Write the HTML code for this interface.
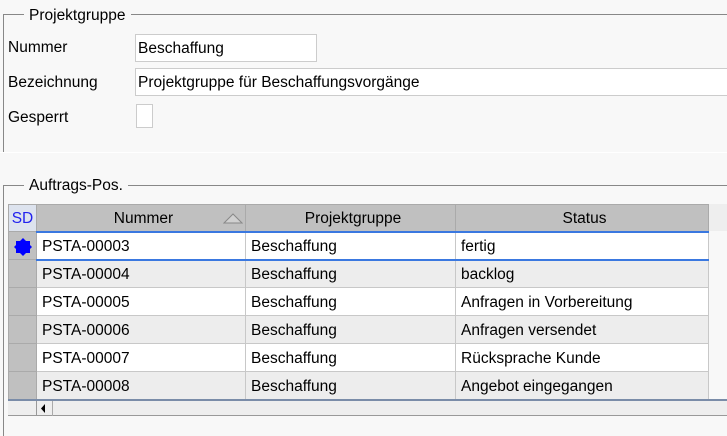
<!DOCTYPE html>
<html><head><meta charset="utf-8"><style>
*{margin:0;padding:0;box-sizing:border-box}
body{width:727px;height:436px;background:#f8f8f8;font-family:"Liberation Sans",sans-serif;font-size:15.5px;color:#000;position:relative;overflow:hidden}
.a{position:absolute}
.lbl{position:absolute;left:8px}
.inp{position:absolute;background:#fff;border:1px solid #ccc;padding-left:2px;line-height:28px}
table{position:absolute;left:8px;top:204px;border-collapse:collapse;table-layout:fixed}
td,th{height:28px;border:1px solid #c8c8c8;padding-left:5px;padding-top:2px;text-align:left;font-weight:normal;white-space:nowrap}
th{background:#c0c0c0;text-align:center;border-color:#aaa;height:27px}
tr.o td{background:#ededed}
tr.e td{background:#fff}
td.sd{background:#c0c0c0!important;border-color:#aaa;padding:0}
</style></head><body>
<div class="a" style="left:0;top:0;width:727px;height:152px;background:#f8f8f8"></div>
<div class="a" style="left:3px;top:14px;width:724px;border-top:1px solid #888"></div>
<div class="a" style="left:3px;top:14px;height:138px;border-left:1px solid #888"></div>
<div class="a" style="left:24px;top:7px;background:#f8f8f8;padding:0 5px">Projektgruppe</div>
<div class="lbl" style="top:39px">Nummer</div>
<div class="inp" style="left:135px;top:34px;width:182px;height:28px">Beschaffung</div>
<div class="lbl" style="top:74px">Bezeichnung</div>
<div class="inp" style="left:135px;top:68px;width:600px;height:28px">Projektgruppe für Beschaffungsvorgänge</div>
<div class="lbl" style="top:109px">Gesperrt</div>
<div class="a" style="left:136px;top:104px;width:17px;height:24px;background:#fff;border:1px solid #ccc"></div>
<div class="a" style="left:0;top:152px;width:727px;border-top:1px solid #fff"></div>
<div class="a" style="left:3px;top:185px;width:724px;border-top:1px solid #888"></div>
<div class="a" style="left:3px;top:185px;height:251px;border-left:1px solid #888"></div>
<div class="a" style="left:24px;top:177px;background:#f8f8f8;padding:0 5px">Auftrags-Pos.</div>
<div class="a" style="left:708px;top:204px;width:19px;height:27px;background:#eee"></div>
<table>
<colgroup><col style="width:28px"><col style="width:209px"><col style="width:210px"><col style="width:253px"></colgroup>
<tr><th style="background:#dde3ee;color:#22e;padding:2px 0 0 0">SD</th><th style="position:relative">Nummer<svg class="a" style="right:2px;top:8px" width="20" height="11"><path d="M1 10L10 1L19 10Z" fill="#d0d0d0" stroke="#888"/></svg></th><th>Projektgruppe</th><th>Status</th></tr>
<tr class="e"><td class="sd" style="background:#c0c0c0"><svg width="26" height="26" style="display:block;margin-left:1px"><path d="M13 5L16 8L20 8L20 12L22 14L20 16L20 20L16 20L13 23L10 20L6 20L6 16L4 14L6 12L6 8L10 8Z" fill="#00f"/></svg></td><td style="border-top:2px solid #3a78e0;border-bottom:2px solid #3a78e0">PSTA-00003</td><td style="border-top:2px solid #3a78e0;border-bottom:2px solid #3a78e0">Beschaffung</td><td style="border-top:2px solid #3a78e0;border-bottom:2px solid #3a78e0">fertig</td></tr>
<tr class="o"><td class="sd"></td><td>PSTA-00004</td><td>Beschaffung</td><td>backlog</td></tr>
<tr class="e"><td class="sd"></td><td>PSTA-00005</td><td>Beschaffung</td><td>Anfragen in Vorbereitung</td></tr>
<tr class="o"><td class="sd"></td><td>PSTA-00006</td><td>Beschaffung</td><td>Anfragen versendet</td></tr>
<tr class="e"><td class="sd"></td><td>PSTA-00007</td><td>Beschaffung</td><td>Rücksprache Kunde</td></tr>
<tr class="o"><td class="sd"></td><td>PSTA-00008</td><td>Beschaffung</td><td>Angebot eingegangen</td></tr>
</table>
<div class="a" style="left:8px;top:399px;width:719px;border-top:2px solid #7a8ca8"></div>
<div class="a" style="left:8px;top:401px;width:719px;height:15px;background:#eee;border-bottom:1px solid #999"></div>
<div class="a" style="left:36px;top:401px;width:1px;height:15px;background:#999"></div>
<div class="a" style="left:52px;top:401px;width:1px;height:15px;background:#aaa"></div>
<svg class="a" style="left:41px;top:404px" width="5" height="9"><path d="M4 0L0 4.5L4 9Z" fill="#000"/></svg>
</body></html>
